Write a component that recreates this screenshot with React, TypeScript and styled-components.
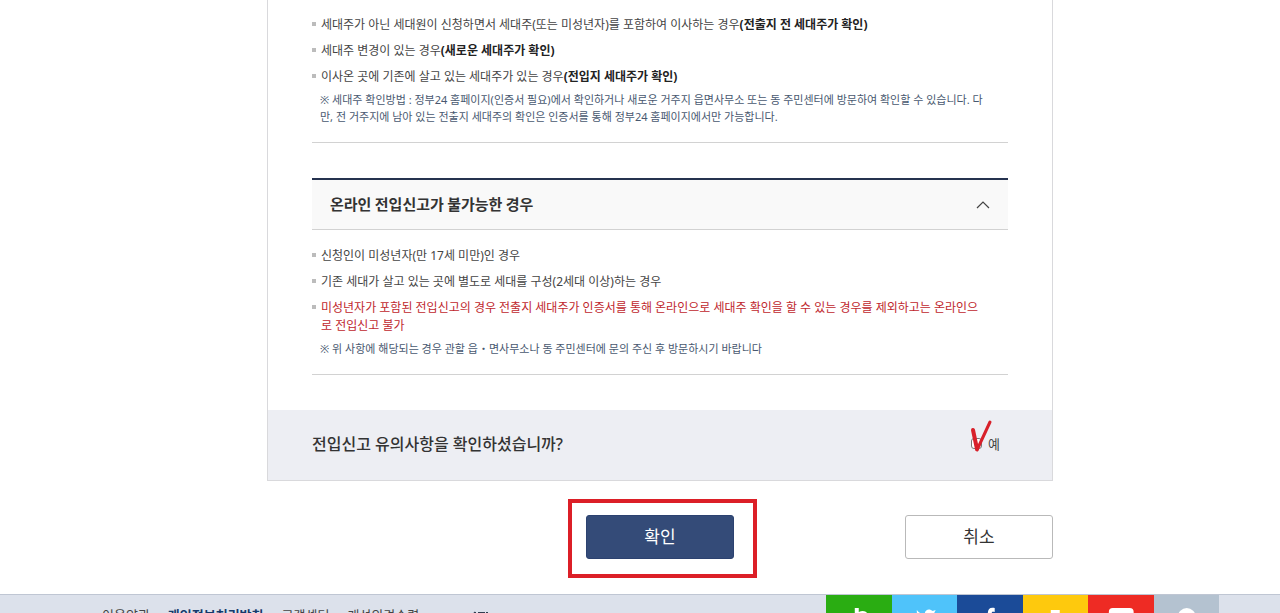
import React from "react";
import styled, { createGlobalStyle } from "styled-components";

const GlobalStyle = createGlobalStyle`
  *, *::before, *::after { box-sizing: border-box; }
  body {
    margin: 0;
    background: #fff;
    color: #444;
    font-family: "Noto Sans", "Noto Sans CJK KR", sans-serif;
    font-size: 12px;
  }
  ul, p, h2, h3 { margin: 0; padding: 0; }
  ul { list-style: none; }
`;

const Page = styled.div`
  height: 100vh;
  overflow: hidden;
`;

const Shell = styled.div`
  padding-left: 40px;
`;

const Content = styled.main`
  width: 100%;
  max-width: 786px;
  margin: 0 auto;
  padding-bottom: 16px;
`;

const Card = styled.section`
  border: 1px solid #d9d9dc;
  border-top: 0;
`;

const CardBody = styled.div`
  padding: 16px 44px 35px;
`;

const Section = styled.div`
  padding-bottom: 17px;
  border-bottom: 1px solid #d2d2d2;

  & + & { margin-top: 35px; }
`;

const Items = styled.ul`
  display: flex;
  flex-direction: column;
  gap: 8px;
`;

const Item = styled.li<{ $alert?: boolean }>`
  display: flex;
  gap: 5px;
  line-height: 18px;
  color: ${(p) => (p.$alert ? "#c0272d" : "#444")};

  &::before {
    content: "";
    flex: none;
    width: 4px;
    height: 4px;
    margin-top: 6px;
    background: #bcbcbc;
  }

  strong { color: #222; }
`;

const Note = styled.p`
  padding: 5px 0 0 8px;
  font-size: 11px;
  line-height: 17px;
  color: #48586f;
`;

const Toggle = styled.button`
  display: flex;
  align-items: center;
  justify-content: space-between;
  width: 100%;
  height: 52px;
  margin-bottom: 17px;
  padding: 0 18px 2px;
  border: 0;
  border-top: 2px solid #25324f;
  border-bottom: 1px solid #d2d2d2;
  background: #f9f9f9;
  color: #333;
  font: bold 15px "Noto Sans CJK KR", sans-serif;

  svg { margin-top: 3px; }
`;

const Confirm = styled.div`
  display: flex;
  align-items: center;
  justify-content: space-between;
  height: 70px;
  padding: 0 52px 4px 44px;
  background: #edeef3;
`;

const Question = styled.h3`
  font-size: 16px;
  font-weight: 500;
  color: #333;
`;

const CheckLabel = styled.label`
  position: relative;
  display: flex;
  align-items: center;
  gap: 6px;
  font-size: 13px;
`;

const Checkbox = styled.input`
  appearance: none;
  width: 11px;
  height: 11px;
  margin: 0;
  border: 1px solid #777;
  border-radius: 3px;
  background: #fff;
`;

const RedTick = styled.svg`
  position: absolute;
  left: -1px;
  top: -15px;
`;

const Actions = styled.div`
  display: grid;
  grid-template-columns: 1fr auto 1fr;
  align-items: center;
  margin-top: 18px;
  column-gap: 8px;
`;

const Highlight = styled.div`
  grid-column: 2;
  padding: 12px 19px 15px 14px;
  margin-left: 5px;
  border: 4px solid #dc1f27;
`;

const Button = styled.button<{ $primary?: boolean }>`
  display: block;
  width: 148px;
  height: 44px;
  padding: 0 0 4px;
  border: 1px solid ${(p) => (p.$primary ? "#2c4270" : "#b9b9b9")};
  border-radius: 3px;
  background: ${(p) => (p.$primary ? "#344b78" : "#fff")};
  color: ${(p) => (p.$primary ? "#fff" : "#333")};
  font: 17px "Noto Sans", "Noto Sans CJK KR", sans-serif;
`;

const CancelSlot = styled.div`
  grid-column: 3;
  justify-self: end;
  padding-bottom: 3px;
`;

const Footer = styled.footer`
  display: flex;
  justify-content: space-between;
  padding: 0 61px 0 102px;
  border-top: 1px solid #bfc6d3;
  background: #dce1eb;
`;

const FooterLinks = styled.nav`
  display: flex;
  gap: 18px;
  padding-top: 11px;
`;

const FooterLink = styled.a<{ $strong?: boolean }>`
  font-size: 13px;
  line-height: 18px;
  text-decoration: none;
  color: ${(p) => (p.$strong ? "#173a6b" : "#444")};
  font-weight: ${(p) => (p.$strong ? 700 : 400)};
`;

const MarkLink = styled.a`
  padding-left: 34px;

  svg { display: block; }
`;

const Social = styled.div`
  display: flex;
  width: 393px;
`;

const SocialLink = styled.a<{ $bg: string }>`
  flex: 1;
  height: 48px;
  background: ${(p) => p.$bg};

  svg { display: block; width: 100%; }
`;

const socials = [
  { name: "네이버 블로그", bg: "#2aad12", art: <path fillRule="evenodd" d="M29 13h4v4c6-3 10 1 10 5s-4 8-9 6v1h-5zm7 7a2 2 0 100 4 2 2 0 000-4z" /> },
  { name: "트위터", bg: "#4fc3fa", art: <path d="M25 15c2 3 5 4 8 4 0-5 5-6 8-3l3-1-2 4c0 10-9 15-18 11 3 0 5-1 6-3-3-1-5-4-5-12z" /> },
  { name: "페이스북", bg: "#1b4b98", art: <path d="M31 34V23h-3v-4h3c0-5 2-7 7-6v4c-3-1-3 0-3 2h3v4h-3v11z" /> },
  { name: "카카오스토리", bg: "#fec90d", art: <path d="M28 15h9v9c0 6-3 9-8 10l-2-4c3-1 4-2 4-5h-3z" /> },
  { name: "유튜브", bg: "#ee2b24", art: <path fillRule="evenodd" d="M25 13h17q4 0 4 4v14q0 4-4 4H25q-4 0-4-4V17q0-4 4-4zm6 7v8l7-4z" /> },
  { name: "인스타그램", bg: "#b4c2d0", art: <circle cx="33" cy="22" r="9" /> },
];

export default function App() {
  return (
    <Page>
      <GlobalStyle />
      <Shell>
        <Content>
          <Card>
            <CardBody>
              <Section>
                <Items>
                  <Item><span>세대주가 아닌 세대원이 신청하면서 세대주(또는 미성년자)를 포함하여 이사하는 경우<strong>(전출지 전 세대주가 확인)</strong></span></Item>
                  <Item><span>세대주 변경이 있는 경우<strong>(새로운 세대주가 확인)</strong></span></Item>
                  <Item><span>이사온 곳에 기존에 살고 있는 세대주가 있는 경우<strong>(전입지 세대주가 확인)</strong></span></Item>
                </Items>
                <Note>
                  ※ 세대주 확인방법 : 정부24 홈페이지(인증서 필요)에서 확인하거나 새로운 거주지 읍면사무소 또는 동 주민센터에 방문하여 확인할 수 있습니다. 다<br />
                  만, 전 거주지에 남아 있는 전출지 세대주의 확인은 인증서를 통해 정부24 홈페이지에서만 가능합니다.
                </Note>
              </Section>
              <Section>
                <h2>
                  <Toggle type="button" aria-expanded="true">
                    온라인 전입신고가 불가능한 경우
                    <svg width="14" height="8" viewBox="0 0 14 8" fill="none" stroke="#444" strokeWidth="1.2" aria-hidden="true">
                      <path d="M1 7l6-6 6 6" />
                    </svg>
                  </Toggle>
                </h2>
                <Items>
                  <Item><span>신청인이 미성년자(만 17세 미만)인 경우</span></Item>
                  <Item><span>기존 세대가 살고 있는 곳에 별도로 세대를 구성(2세대 이상)하는 경우</span></Item>
                  <Item $alert>
                    <span>
                      미성년자가 포함된 전입신고의 경우 전출지 세대주가 인증서를 통해 온라인으로 세대주 확인을 할 수 있는 경우를 제외하고는 온라인으<br />
                      로 전입신고 불가
                    </span>
                  </Item>
                </Items>
                <Note>※ 위 사항에 해당되는 경우 관할 읍・면사무소나 동 주민센터에 문의 주신 후 방문하시기 바랍니다</Note>
              </Section>
            </CardBody>
            <Confirm>
              <Question>전입신고 유의사항을 확인하셨습니까?</Question>
              <CheckLabel>
                <Checkbox type="checkbox" />
                예
                <RedTick width="22" height="34" viewBox="0 0 22 34" fill="none" stroke="#d8202a" strokeLinecap="round" strokeLinejoin="round" aria-hidden="true">
                  <path strokeWidth="4" d="M3 11l4 19" />
                  <path strokeWidth="3" d="M7 31L20 3" />
                </RedTick>
              </CheckLabel>
            </Confirm>
          </Card>
          <Actions>
            <Highlight>
              <Button type="button" $primary>확인</Button>
            </Highlight>
            <CancelSlot>
              <Button type="button">취소</Button>
            </CancelSlot>
          </Actions>
        </Content>
      </Shell>
      <Footer>
        <FooterLinks>
          <FooterLink href="#terms">이용약관</FooterLink>
          <FooterLink href="#privacy" $strong>개인정보처리방침</FooterLink>
          <FooterLink href="#support">고객센터</FooterLink>
          <FooterLink href="#opinion">개선의견수렴</FooterLink>
          <MarkLink href="#mark" aria-label="웹 접근성">
            <svg width="18" height="18" viewBox="0 0 18 18" fill="none" stroke="#333f52" strokeWidth="2" aria-hidden="true">
              <path d="M1 15L4 6v11M8 7h5v8H8zM16 6v11" />
            </svg>
          </MarkLink>
        </FooterLinks>
        <Social>
          {socials.map((s) => (
            <SocialLink key={s.name} href="#social" aria-label={s.name} $bg={s.bg}>
              <svg height="48" viewBox="0 0 66 48" fill="#fff" aria-hidden="true">{s.art}</svg>
            </SocialLink>
          ))}
        </Social>
      </Footer>
    </Page>
  );
}
